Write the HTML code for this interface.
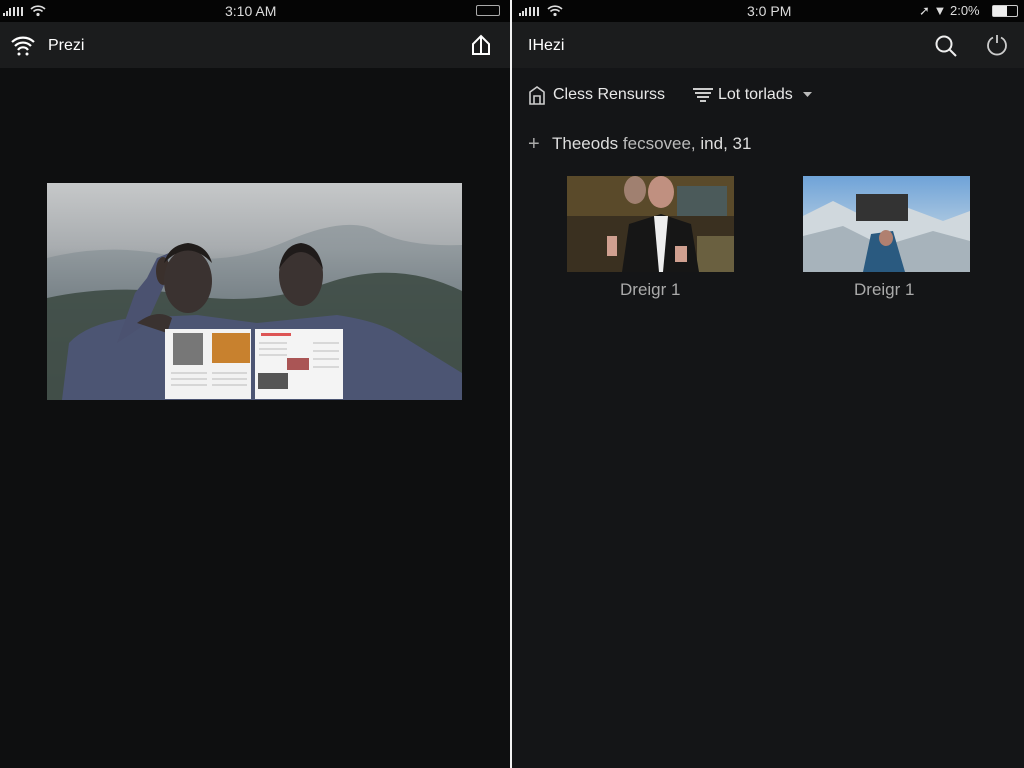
<!DOCTYPE html>
<html><head><meta charset="utf-8"><style>
*{margin:0;padding:0;box-sizing:border-box}
body{width:1024px;height:768px;background:#0d0e0f;font-family:"Liberation Sans",sans-serif;color:#eee;position:relative;overflow:hidden}
.p{position:absolute;top:0;height:768px}
.sb{position:absolute;top:0;left:0;right:0;height:22px;background:#050505;font-size:14px;color:#ddd}
.nav{position:absolute;top:22px;left:0;right:0;height:46px;background:#1b1c1d}
.t{position:absolute;white-space:nowrap}
</style></head><body>
<div class="p" style="left:0;width:510px;background:#0e0f10">
 <div class="sb">
  <svg class="t" style="left:3px;top:5px" width="26" height="12" viewBox="0 0 26 12"><rect x="0" y="8" width="2" height="3" fill="#ddd"/><rect x="3" y="6" width="2" height="5" fill="#ddd"/><rect x="6" y="3" width="2" height="8" fill="#ddd"/><rect x="10" y="2" width="2" height="9" fill="#ddd"/><rect x="14" y="2" width="2" height="9" fill="#ddd"/><rect x="18" y="2" width="2" height="9" fill="#ddd"/></svg>
  <svg class="t" style="left:30px;top:4px" width="16" height="13" viewBox="0 0 16 13"><path d="M1 5a10 10 0 0 1 14 0M3.5 7.5a6.5 6.5 0 0 1 9 0" stroke="#ddd" stroke-width="1.6" fill="none"/><circle cx="8" cy="10.5" r="1.6" fill="#ddd"/></svg>
  <span class="t" style="left:225px;top:3px">3:10 AM</span>
  <div class="t" style="left:476px;top:5px;width:24px;height:11px;border:1px solid #aaa;border-radius:2px"></div>
 </div>
 <div class="nav">
  <svg class="t" style="left:10px;top:14px" width="26" height="20" viewBox="0 0 26 20"><path d="M2 6a16 16 0 0 1 22 0M5 10a11 11 0 0 1 16 0M8 14a6 6 0 0 1 10 0" stroke="#fff" stroke-width="2.2" fill="none"/><circle cx="9" cy="18" r="1.5" fill="#fff"/><circle cx="17" cy="18" r="1.5" fill="#fff"/></svg>
  <span class="t" style="left:48px;top:15px;font-size:16px;color:#fff">Prezi</span>
  <svg class="t" style="left:470px;top:12px" width="22" height="22" viewBox="0 0 22 22"><path d="M3 20V10L11 2L19 10V20ZM11 2V20" stroke="#fff" stroke-width="2" fill="none"/></svg>
 </div>
 <svg class="t" style="left:47px;top:183px" width="415" height="217" viewBox="0 0 415 217">
  <defs><linearGradient id="sky" x1="0" y1="0" x2="0" y2="1"><stop offset="0" stop-color="#c6c8c9"/><stop offset=".3" stop-color="#a8acaf"/><stop offset=".55" stop-color="#6d777c"/><stop offset="1" stop-color="#2f3a34"/></linearGradient></defs>
  <rect width="415" height="217" fill="url(#sky)"/>
  <path d="M0 75Q60 60 120 72T240 58T330 48T415 62V217H0Z" fill="#7f8a90" opacity=".55"/>
  <path d="M0 115Q70 100 140 112T280 100T415 108V217H0Z" fill="#3e4b45" opacity=".9"/>
  <path d="M15 217L22 160Q40 140 85 135L150 132L210 140L290 132Q330 138 350 150L415 190V217Z" fill="#4c5573"/>
  <path d="M70 160L88 110L100 95L110 75L122 70L118 100L100 140Z" fill="#4b5270"/>
  <ellipse cx="116" cy="88" rx="7" ry="14" fill="#3a302c"/>
  <ellipse cx="141" cy="98" rx="24" ry="32" fill="#3a3230"/>
  <path d="M117 80Q141 55 165 80Q160 62 141 60Q122 62 117 80Z" fill="#201c1a"/>
  <ellipse cx="254" cy="92" rx="22" ry="31" fill="#3b3331"/>
  <path d="M232 86Q254 52 276 86Q272 62 254 60Q236 62 232 86Z" fill="#1f1b1a"/>
  <path d="M90 140Q110 125 125 135L120 150Z" fill="#3a3230"/>
  <rect x="118" y="146" width="86" height="70" fill="#f2f2f2"/>
  <rect x="208" y="146" width="88" height="70" fill="#f4f4f4"/>
  <rect x="126" y="150" width="30" height="32" fill="#777"/>
  <rect x="165" y="150" width="38" height="30" fill="#c8812e"/>
  <rect x="240" y="175" width="22" height="12" fill="#a55"/>
  <rect x="211" y="190" width="30" height="16" fill="#555"/>
  <rect x="214" y="150" width="30" height="3" fill="#d55"/>
  <g stroke="#bbb" stroke-width="1"><path d="M124 190H160M124 196H160M124 202H160M165 190H200M165 196H200M165 202H200M212 160H240M212 166H240M212 172H240M266 160H292M266 168H292M266 176H292M266 184H292"/></g>
 </svg>
</div>
<div style="position:absolute;left:510px;top:0;width:2px;height:768px;background:#f2f2f2"></div>
<div class="p" style="left:512px;width:512px;background:#141517">
 <div class="sb">
  <svg class="t" style="left:7px;top:5px" width="26" height="12" viewBox="0 0 26 12"><rect x="0" y="8" width="2" height="3" fill="#ddd"/><rect x="3" y="6" width="2" height="5" fill="#ddd"/><rect x="6" y="3" width="2" height="8" fill="#ddd"/><rect x="10" y="2" width="2" height="9" fill="#ddd"/><rect x="14" y="2" width="2" height="9" fill="#ddd"/><rect x="18" y="2" width="2" height="9" fill="#ddd"/></svg>
  <svg class="t" style="left:35px;top:4px" width="16" height="13" viewBox="0 0 16 13"><path d="M1 5a10 10 0 0 1 14 0M3.5 7.5a6.5 6.5 0 0 1 9 0" stroke="#ddd" stroke-width="1.6" fill="none"/><circle cx="8" cy="10.5" r="1.6" fill="#ddd"/></svg>
  <span class="t" style="left:235px;top:3px">3:0 PM</span>
  <span class="t" style="left:407px;top:3px;font-size:13px">➚ ▼ 2:0%</span>
  <div class="t" style="left:480px;top:5px;width:26px;height:12px;border:1px solid #ccc;border-radius:2px"><div style="width:14px;height:10px;background:#eee"></div></div>
 </div>
 <div class="nav">
  <span class="t" style="left:16px;top:15px;font-size:16px;color:#fff">IHezi</span>
  <svg class="t" style="left:422px;top:12px" width="24" height="24" viewBox="0 0 24 24"><circle cx="10" cy="10" r="7.5" stroke="#eee" stroke-width="2" fill="none"/><path d="M15.5 15.5L22 22" stroke="#eee" stroke-width="2"/></svg>
  <svg class="t" style="left:474px;top:12px" width="22" height="22" viewBox="0 0 22 22"><path d="M7 3.5A9 9 0 1 0 15 3.5M11 1V9" stroke="#ccc" stroke-width="1.8" fill="none"/></svg>
 </div>
 <svg class="t" style="left:16px;top:85px" width="18" height="20" viewBox="0 0 18 20"><path d="M2 19V7L9 2L16 7V19ZM6 19V11H12V19" stroke="#ccc" stroke-width="1.6" fill="none"/></svg>
 <span class="t" style="left:41px;top:86px;font-size:16px;color:#e8e8e8">Cless Rensurss</span>
 <svg class="t" style="left:180px;top:86px" width="22" height="18" viewBox="0 0 22 18"><path d="M1 3H21M3 7H19M5 11H17M8 15H14" stroke="#ccc" stroke-width="2"/></svg>
 <span class="t" style="left:206px;top:86px;font-size:16px;color:#e8e8e8">Lot torlads</span>
 <svg class="t" style="left:291px;top:92px" width="9" height="6" viewBox="0 0 9 6"><path d="M0 0H9L4.5 5Z" fill="#bbb"/></svg>
 <span class="t" style="left:16px;top:133px;font-size:20px;color:#aaa">+</span>
 <span class="t" style="left:40px;top:134px;font-size:17px;color:#ddd">Theeods <span style="color:#bbb">fecsovee,</span> ind, 31</span>
 <svg class="t" style="left:55px;top:176px" width="167" height="96" viewBox="0 0 167 96">
  <rect width="167" height="96" fill="#3a3020"/>
  <rect x="0" y="0" width="167" height="40" fill="#5a4a2a"/>
  <rect x="110" y="10" width="50" height="30" fill="#4b5a5a"/>
  <rect x="130" y="60" width="37" height="36" fill="#6a6040"/>
  <ellipse cx="94" cy="16" rx="13" ry="16" fill="#c09080"/>
  <ellipse cx="68" cy="14" rx="11" ry="14" fill="#a08070"/>
  <path d="M55 96L62 48L94 38L124 48L132 96Z" fill="#161616"/>
  <path d="M87 40H101L96 96H92Z" fill="#eee"/>
  <rect x="40" y="60" width="10" height="20" fill="#d0a090"/>
  <rect x="108" y="70" width="12" height="16" fill="#d0a090"/>
 </svg>
 <span class="t" style="left:108px;top:280px;font-size:17px;color:#aaa">Dreigr 1</span>
 <svg class="t" style="left:291px;top:176px" width="167" height="96" viewBox="0 0 167 96">
  <defs><linearGradient id="s2" x1="0" y1="0" x2="0" y2="1"><stop offset="0" stop-color="#6fa3d8"/><stop offset=".5" stop-color="#a9c6e0"/><stop offset="1" stop-color="#dfe6ec"/></linearGradient></defs>
  <rect width="167" height="96" fill="url(#s2)"/>
  <path d="M0 40L30 25L60 40L100 30L140 45L167 35V96H0Z" fill="#d0d8dd"/>
  <path d="M0 60L40 50L80 70L130 55L167 65V96H0Z" fill="#a7b3bb"/>
  <rect x="53" y="18" width="52" height="27" fill="#333"/>
  <path d="M60 96L68 58L90 55L102 96Z" fill="#2a5a80"/>
  <ellipse cx="83" cy="62" rx="7" ry="8" fill="#b08070"/>
 </svg>
 <span class="t" style="left:342px;top:280px;font-size:17px;color:#aaa">Dreigr 1</span>
</div>
</body></html>
